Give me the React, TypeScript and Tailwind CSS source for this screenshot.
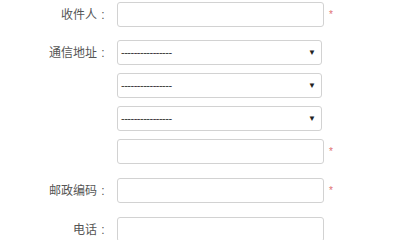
const font = { fontFamily: '"Liberation Sans", "Noto Sans CJK SC", sans-serif' };

function Label({ text }: { text: string }) {
  return (
    <div className="flex w-[109px] shrink-0 justify-end text-[12px] text-[#555]">
      <span>{text}</span>
      <span className="inline-block w-[12px] text-center">:</span>
    </div>
  );
}

function TextField({ required }: { required?: boolean }) {
  return (
    <div className="flex items-center">
      <div className="h-[25px] w-[207px] rounded-[3px] border border-[#d2d2d2] bg-white" />
      {required ? <span className="ml-[5px] text-[10px] leading-none text-[#e07070]">*</span> : null}
    </div>
  );
}

function SelectField() {
  return (
    <div className="flex h-[25px] w-[205px] items-center justify-between rounded-[3px] border border-[#d2d2d2] bg-white pl-[3px] pr-[5px]">
      <span className="text-[11px] leading-none tracking-[-0.5px] text-[#333]">----------------</span>
      <span className="text-[8px] leading-none text-[#222]">▼</span>
    </div>
  );
}

export default function App() {
  return (
    <div className="h-[240px] w-[400px] overflow-hidden bg-white pt-[2px]" style={font}>
      <div className="flex items-center gap-[8px]">
        <Label text="收件人" />
        <TextField required />
      </div>

      <div className="mt-[13px] flex items-start gap-[8px]">
        <div className="flex h-[25px] items-center">
          <Label text="通信地址" />
        </div>
        <div className="flex flex-col gap-[8px]">
          <SelectField />
          <SelectField />
          <SelectField />
          <TextField required />
        </div>
      </div>

      <div className="mt-[14px] flex items-center gap-[8px]">
        <Label text="邮政编码" />
        <TextField required />
      </div>

      <div className="mt-[14px] flex items-center gap-[8px]">
        <Label text="电话" />
        <TextField />
      </div>
    </div>
  );
}
